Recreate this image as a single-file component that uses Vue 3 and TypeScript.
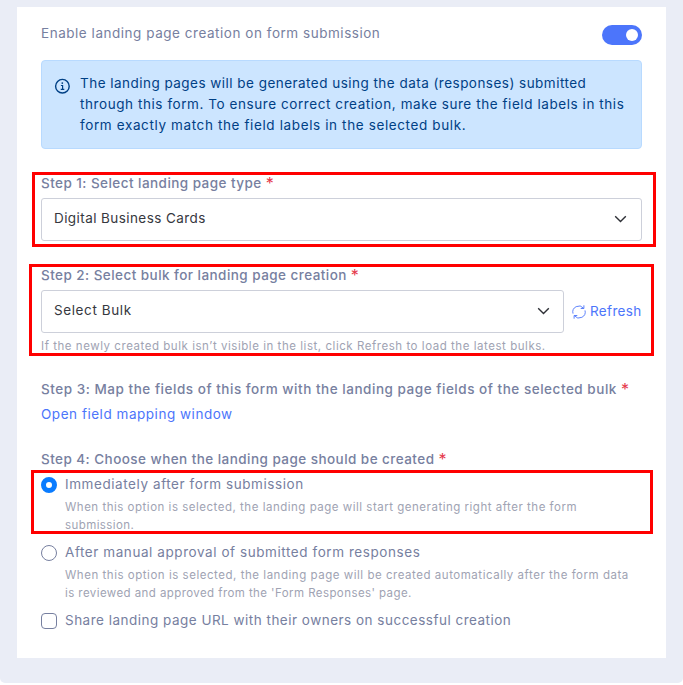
<template>
  <div class="page">
    <div class="card">
      <div class="header">
        <span class="title">Enable landing page creation on form submission</span>
        <button
            class="switch"
            role="switch"
            :class="{ on: enabled }"
            :aria-checked="enabled"
            @click="enabled = !enabled"
        />
      </div>

      <div class="alert">
        <svg class="info" viewBox="0 0 16 16" fill="none" stroke="currentColor">
          <circle cx="8.4" cy="8.2" r="6.8" stroke-width="1.4"/>
          <path d="M6.9 7.5h1.7v3.7M6.7 11.4h3.6" stroke-width="1.2"/>
          <circle cx="8.3" cy="5.1" r="0.9" fill="currentColor" stroke="none"/>
        </svg>
        <p>
          <span class="first-line">The landing pages will be generated using the data (responses) submitted</span><br>
          through this form. To ensure correct creation, make sure the field labels in this<br>
          <span class="last-line">form exactly match the field labels in the selected bulk.</span>
        </p>
      </div>

      <section class="step step-type">
        <div class="label"><span>Step 1: Select landing page type</span><i>*</i></div>
        <div class="select" tabindex="0">
          <span class="value">Digital Business Cards</span>
          <svg class="chevron" viewBox="0 0 13 8"><path d="M1.2 1.2l5.3 5.3 5.3-5.3"/></svg>
        </div>
        <div class="mark mark-type"/>
      </section>

      <section class="step step-bulk">
        <div class="label"><span>Step 2: Select bulk for landing page creation</span><i>*</i></div>
        <div class="row">
          <div class="select" tabindex="0">
            <span class="value">Select Bulk</span>
            <svg class="chevron" viewBox="0 0 13 8"><path d="M1.2 1.2l5.3 5.3 5.3-5.3"/></svg>
          </div>
          <a class="refresh">
            <svg viewBox="0 0 14 14">
              <path d="M1 8.6A6.1 6.1 0 0 1 11.6 3.2M13 5.4A6.1 6.1 0 0 1 2.4 10.8"/>
              <path d="M11.9 .3v3.2H8.7M2.1 13.7v-3.2h3.2"/>
            </svg>
            <span>Refresh</span>
          </a>
        </div>
        <div class="hint">If the newly created bulk isn’t visible in the list, click Refresh to load the latest bulks.</div>
        <div class="mark mark-bulk"/>
      </section>

      <section class="step step-map">
        <div class="label"><span>Step 3: Map the fields of this form with the landing page fields of the selected bulk</span><i>*</i></div>
        <a class="link">Open field mapping window</a>
      </section>

      <section class="step step-when">
        <div class="label"><span>Step 4: Choose when the landing page should be created</span><i>*</i></div>
        <div
            v-for="option in options"
            :key="option.value"
            class="option"
            :class="option.value"
            @click="timing = option.value"
        >
          <span class="radio" :class="{ checked: timing === option.value }"/>
          <div>
            <div class="option-title">{{ option.title }}</div>
            <div class="option-text">
              <div v-for="line in option.text" :key="line">{{ line }}</div>
            </div>
          </div>
        </div>
        <div class="option share" @click="shareUrl = !shareUrl">
          <span class="checkbox" :class="{ checked: shareUrl }"/>
          <div class="option-title">Share landing page URL with their owners on successful creation</div>
        </div>
        <div class="mark mark-when"/>
      </section>
    </div>
  </div>
</template>

<script setup lang="ts">
import {ref} from 'vue'

type Timing = 'immediate' | 'manual'

interface Option {
  value: Timing
  title: string
  text: string[]
}

const enabled = ref(true)
const shareUrl = ref(false)
const timing = ref<Timing>('immediate')

const options: Option[] = [
  {
    value: 'immediate',
    title: 'Immediately after form submission',
    text: [
      'When this option is selected, the landing page will start generating right after the form',
      'submission.'
    ]
  },
  {
    value: 'manual',
    title: 'After manual approval of submitted form responses',
    text: [
      'When this option is selected, the landing page will be created automatically after the form data',
      'is reviewed and approved from the \'Form Responses\' page.'
    ]
  }
]
</script>

<style>
body {
  margin: 0;
  background: #fff;
}
</style>

<style scoped>
.page {
  box-sizing: border-box;
  height: 683px;
  padding: 7px 17px 25px;
  background: #eaedf6;
  border-radius: 0 0 5px 5px;
  font-family: Inter, "Liberation Sans", sans-serif;
  font-size: 13.5px;
  line-height: 21px;
  letter-spacing: 0.53px;
  color: #7780a0;
}

.card {
  box-sizing: border-box;
  height: 651px;
  padding: 16px 24px 0;
  background: #fff;
  white-space: nowrap;
}

.header {
  display: flex;
  justify-content: space-between;
  height: 37px;
}

.switch {
  display: flex;
  align-items: center;
  width: 40px;
  height: 20px;
  margin-top: 2px;
  padding: 0 4px;
  border: 0;
  border-radius: 10px;
  background: #c3c8d6;
}

.switch.on {
  justify-content: flex-end;
  background: #4c75fb;
}

.switch::after {
  content: '';
  width: 12px;
  height: 12px;
  border-radius: 50%;
  background: #fff;
}

.alert {
  display: flex;
  gap: 10px;
  padding: 12px;
  border: 1px solid #b8daff;
  border-radius: 4px;
  background: #cce5ff;
  color: #004085;
  letter-spacing: 0.57px;
}

.alert p {
  margin: 0;
}

.first-line {
  letter-spacing: 0.47px;
}

.last-line {
  letter-spacing: 0.62px;
}

.info {
  width: 16px;
  height: 16px;
  margin-top: 5px;
}

.step {
  position: relative;
  margin-top: 24px;
}

.label {
  display: flex;
  gap: 4px;
  height: 25px;
  font-weight: 500;
  letter-spacing: 0.45px;
}

.step-map .label {
  letter-spacing: 0.53px;
}

.label i {
  color: #e5394b;
  font-size: 16px;
  font-style: normal;
  font-weight: 400;
}

.select {
  box-sizing: border-box;
  display: flex;
  flex: 1;
  align-items: center;
  justify-content: space-between;
  height: 43px;
  padding: 0 14px 2px 12px;
  border: 1px solid #cdd0da;
  border-radius: 3px;
  color: #363840;
}

.row .select {
  padding-right: 13px;
}

.step-type .value {
  letter-spacing: 0.42px;
}

.step-bulk .value {
  letter-spacing: 0.6px;
}

.chevron {
  width: 13px;
  height: 8px;
  fill: none;
  stroke: #2e3036;
  stroke-width: 1.4;
}

.row {
  display: flex;
  align-items: center;
  gap: 8px;
}

.refresh,
.link {
  color: #4c75fb;
  cursor: pointer;
}

.refresh {
  display: flex;
  align-items: center;
  gap: 4px;
  width: 70px;
  letter-spacing: 0.35px;
}

.refresh svg {
  width: 14px;
  height: 14px;
  fill: none;
  stroke: currentColor;
  stroke-width: 0.9;
}

.hint,
.option-text {
  font-size: 11.5px;
  line-height: 18px;
  color: #a0a3b3;
}

.hint {
  padding-top: 4px;
  letter-spacing: 0.54px;
}

.link {
  display: block;
}

.option {
  display: flex;
  gap: 8px;
  margin-bottom: 8px;
}

.option-title {
  letter-spacing: 0.57px;
}

.share .option-title {
  letter-spacing: 0.49px;
}

.option-text {
  margin-top: 3px;
}

.immediate .option-text {
  letter-spacing: 0.51px;
}

.option-text div:last-child {
  letter-spacing: 0.42px;
}

.radio,
.checkbox {
  box-sizing: border-box;
  flex: none;
  width: 16px;
  height: 16px;
  margin-top: 3px;
  border: 1px solid #7780a0;
  border-radius: 50%;
}

.checkbox {
  border-radius: 4px;
}

.radio.checked {
  border: 5px solid #0a7cff;
}

.checkbox.checked {
  background: #0a7cff;
}

.mark {
  position: absolute;
  box-sizing: border-box;
  border: 3px solid #f00;
  pointer-events: none;
}

.mark-type {
  left: -9px;
  top: -1px;
  width: 624px;
  height: 75px;
}

.mark-bulk {
  left: -12px;
  top: -1px;
  width: 625px;
  height: 92px;
}

.mark-when {
  left: -10px;
  top: 21px;
  width: 622px;
  height: 64px;
}
</style>
